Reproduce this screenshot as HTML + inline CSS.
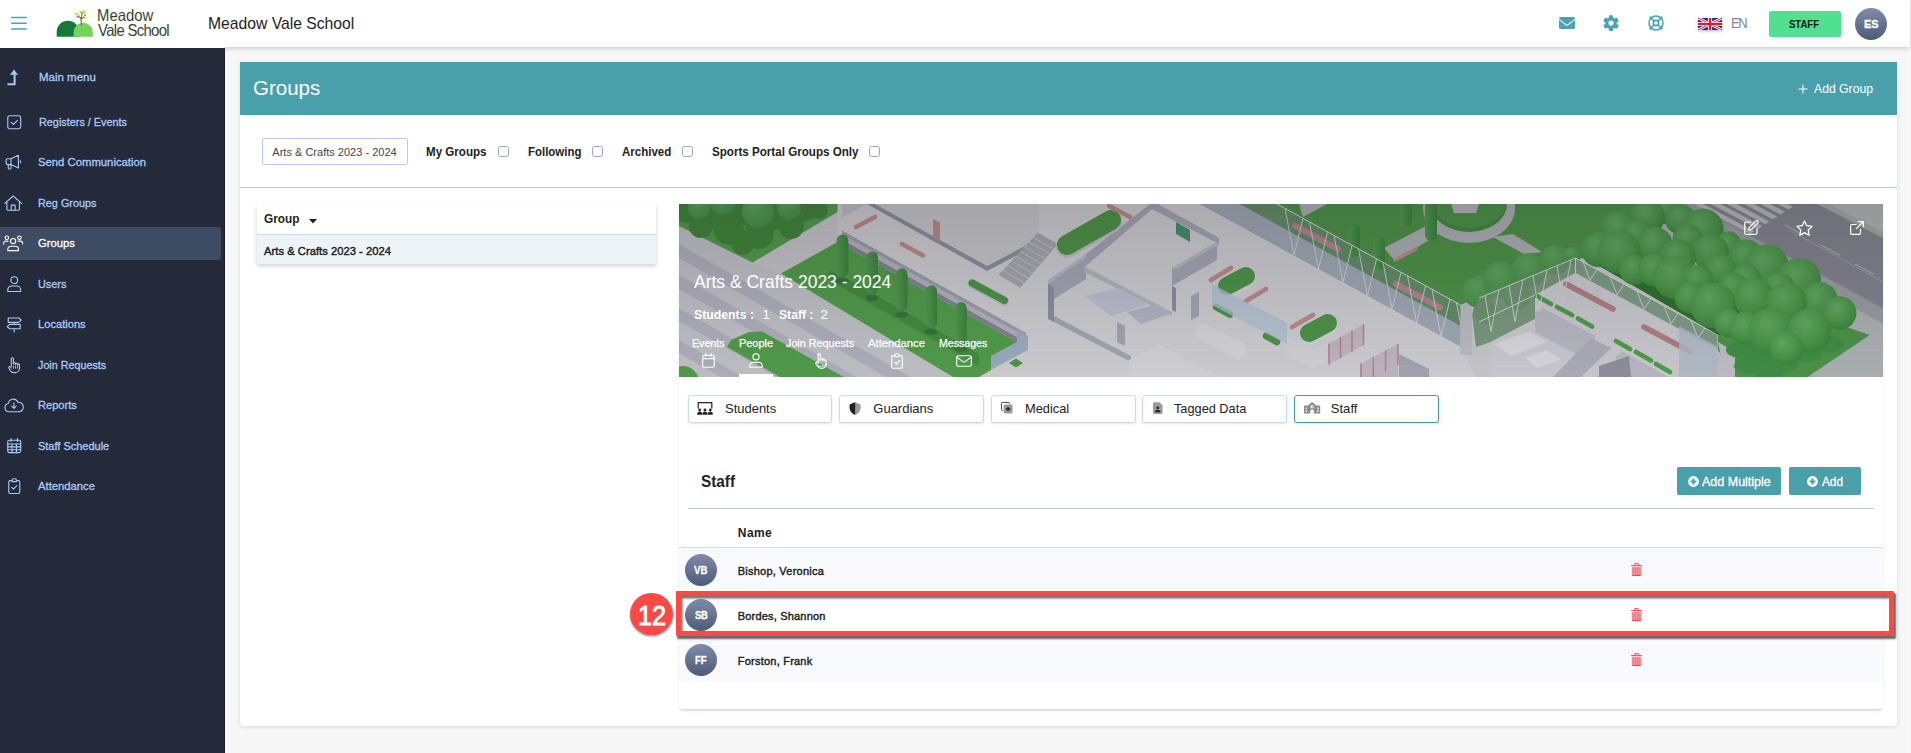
<!DOCTYPE html>
<html lang="en">
<head>
<meta charset="utf-8">
<title>Groups - Meadow Vale School</title>
<style>
*{box-sizing:border-box;margin:0;padding:0}
html,body{width:1911px;height:753px;overflow:hidden}
body{position:relative;background:#f7f7f7;font-family:"Liberation Sans",sans-serif;color:#222}
.t{position:absolute;transform-origin:0 50%;white-space:nowrap;line-height:20px;height:20px;display:block}
.abs{position:absolute}
svg{position:absolute;overflow:visible}
#top{position:absolute;left:0;top:0;width:1910px;height:47px;background:#fff;box-shadow:0 1px 5px rgba(0,0,0,.22);z-index:5}
#side{position:absolute;left:0;top:48px;width:225px;height:705px;background:#252a3a;border-right:1px solid #1b1f2d;z-index:6}
#side .active{position:absolute;left:0;top:179px;width:221px;height:33px;background:#3d4b63;border-radius:0 3px 3px 0}
#main{position:absolute;left:225px;top:48px;width:1686px;height:705px;border-right:1px solid #fcfcfc}
.card{position:absolute;left:15px;top:14px;width:1657px;height:664px;background:#fff;border-radius:0 0 4px 4px;box-shadow:0 1px 4px rgba(60,70,110,.17)}
.card-head{position:absolute;left:0;top:0;width:1657px;height:53px;background:#49a0ab}
.hr{position:absolute;height:1px;background:#b9c6dd}
.search{position:absolute;left:22px;top:76px;width:146px;height:27px;border:1px solid #b5cdee;border-radius:2px;background:#fff}
.cb{position:absolute;width:11px;height:11px;border:1px solid #9aa9c2;border-radius:2.5px;background:#fff}
.list{position:absolute;left:17px;top:142px;width:399px;height:60px;background:#fff;box-shadow:0 2px 4px rgba(60,70,110,.25)}
.list .row{position:absolute;left:0;top:30px;width:399px;height:30px;background:#ecf4f7;border-top:1px solid #c9dcf0}
.detail{position:absolute;left:439px;top:142px;width:1204px;height:505px;background:#fff;border-radius:0 0 3px 3px;box-shadow:0 1px 3px rgba(60,70,110,.12),0 3px 3px -2px rgba(60,70,110,.2)}
.banner{position:absolute;left:0;top:0;width:1204px;height:173px;overflow:hidden;background:#b9bac2}
.tab{position:absolute;top:191px;width:144px;height:28px;border:1px solid #c9dbf3;border-radius:3px;background:#fff;box-shadow:0 1px 2px rgba(120,140,180,.22)}
.tab.on{border:1.5px solid #3f9aa8}
.btn{position:absolute;top:263px;height:28px;background:#49a0ab;border-radius:2px}
.trow{position:absolute;left:0;width:1204px;height:45px;background:#f9fafd}
.av{position:absolute;width:32px;height:32px;border-radius:50%;background:linear-gradient(#7d8cab,#4e5b78)}
.hl{position:absolute;left:-3px;top:387px;width:1218px;height:44.800px;border:5px solid #fb4a46;box-shadow:1.500px 2.500px 2px rgba(0,0,0,.6),inset 1.500px 2.500px 2px rgba(0,0,0,.55);border-radius:1px}
.badge{position:absolute;width:42.600px;height:42px;border-radius:50%;background:#fb4a46;z-index:6;box-shadow:0 1.500px 2px rgba(0,0,0,.4)}

.sb{-webkit-text-stroke:.3px currentColor}
.bt{-webkit-text-stroke:.25px #fff}
#top::after{content:"";position:absolute;left:0;top:47px;width:225px;height:1px;background:#fff}
.ini{-webkit-text-stroke:.3px #fff}
.sbd{-webkit-text-stroke:.4px currentColor}
.b12{-webkit-text-stroke:.9px #fff}
.btn .t{-webkit-text-stroke:.3px #fff}

</style>
</head>
<body>
<header id="top">
<svg class="ham" style="left:11px;top:16px" width="16" height="14" viewBox="0 0 16 14"><path d="M0.7 1.5h14.6M0.7 7.2h14.6M0.7 12.9h14.6" stroke="#4aa3b1" stroke-width="1.5" stroke-linecap="round" fill="none"/></svg>
<svg class="logo" style="left:56px;top:8px" width="38" height="30" viewBox="0 0 38 30">
<path d="M0.7 28.8V24a11.2 11.2 0 0 1 22.4 0v4.8z" fill="#137a3c"/>
<path d="M17.6 28.8V24.4a9.6 9.6 0 0 1 19.2 0v4.4z" fill="#77d15a"/>
<path d="M25.3 16.6c.1-2.5-.2-4.700-.4-6.300l-2.900-2.300M25 10.300l.9-3.600M25.300 11.200l2.600-2.200" stroke="#8a5a3c" stroke-width="1.100" fill="none" stroke-linecap="round"/>
<g fill="#f5d33c"><circle cx="20.3" cy="5.800" r="1.500"/><circle cx="22.600" cy="7.100" r="1.200"/><circle cx="28.200" cy="4.300" r="1.600"/><circle cx="29.300" cy="9.800" r="1.300"/><circle cx="27.300" cy="2.800" r="1"/></g>
<g fill="#5da63c"><circle cx="26" cy="5.100" r="1.100"/><circle cx="21.300" cy="8.600" r=".9"/><circle cx="28.900" cy="7.200" r="1"/><circle cx="24.300" cy="4" r=".8"/></g>
</svg>
<span id="t1" class="t " style="left:97.00px;top:4.98px;font-size:16.5px;font-weight:400;color:#36452f;transform:scaleX(0.9010);">Meadow</span>
<span id="t2" class="t " style="left:98.00px;top:19.88px;font-size:16.5px;font-weight:400;color:#36452f;letter-spacing:-0.729px;transform:scaleX(0.9000);">Vale School</span>
<span id="t3" class="t " style="left:208.40px;top:13.95px;font-size:16.6px;font-weight:400;color:#222;transform:scaleX(0.9452);">Meadow Vale School</span>
<svg style="left:1558.700px;top:16.700px" width="16" height="12" viewBox="0 0 16 12"><path d="M1.500 0h13A1.500 1.500 0 0 1 16 1.500v.2L8.900 7.300a1.500 1.500 0 0 1-1.800 0L0 1.700v-.2A1.500 1.500 0 0 1 1.500 0z" fill="#4aa3b1"/><path d="M0 3l6.500 5.100a2.500 2.500 0 0 0 3 0L16 3v7.500A1.500 1.500 0 0 1 14.500 12h-13A1.500 1.500 0 0 1 0 10.500z" fill="#4aa3b1"/></svg>
<svg style="left:1603.300px;top:14.800px" width="16" height="17" viewBox="0 0 16 17"><path d="M6.65 1.13L9.35 1.13L9.47 3.32L11.49 4.48L13.45 3.50L14.80 5.83L12.97 7.04L12.97 9.36L14.80 10.57L13.45 12.90L11.49 11.92L9.47 13.08L9.35 15.27L6.65 15.27L6.53 13.08L4.51 11.92L2.55 12.90L1.20 10.57L3.03 9.36L3.03 7.04L1.20 5.83L2.55 3.50L4.51 4.48L6.53 3.32ZM4.60 8.20a3.40 3.40 0 1 0 6.80 0a3.40 3.40 0 1 0 -6.80 0Z" fill="#4aa3b1" fill-rule="evenodd" stroke="#4aa3b1" stroke-width="1.600" stroke-linejoin="round"/></svg>
<svg style="left:1648.200px;top:15px" width="16" height="16" viewBox="0 0 16 16"><g fill="none" stroke="#4aa3b1"><circle cx="8" cy="8" r="7" stroke-width="1.500"/><circle cx="8" cy="8" r="2.600" stroke-width="1.700"/><path d="M2.300 2.300l3.700 3.700M13.700 2.300l-3.700 3.700M2.300 13.700l3.700-3.700M13.700 13.700l-3.700-3.700" stroke-width="1.700"/><path d="M1.900 1.900l1 1M14.100 1.900l-1 1M1.900 14.100l1-1M14.100 14.100l-1-1" stroke-width="2.400"/></g></svg>
<svg style="left:1698px;top:18px;box-shadow:0 1px 3px rgba(0,0,0,.3)" width="24" height="12" viewBox="0 0 24 12"><rect width="24" height="12" fill="#1b2f8c"/><path d="M0 0l24 12M24 0L0 12" stroke="#fff" stroke-width="2.600"/><path d="M0 0l24 12M24 0L0 12" stroke="#d8202f" stroke-width="1"/><path d="M12 0v12M0 6h24" stroke="#fff" stroke-width="4.200"/><path d="M12 0v12M0 6h24" stroke="#d8202f" stroke-width="2.400"/></svg>
<span id="t4" class="t " style="left:1731.40px;top:13.21px;font-size:14.4px;font-weight:400;color:#7b80a2;letter-spacing:-1.556px;transform:scaleX(0.9000);">EN</span>
<div class="abs" style="left:1769px;top:11px;width:72px;height:26px;background:#50e090;border-radius:2px"></div>
<span id="t5" class="t " style="left:1789.30px;top:14.23px;font-size:10.6px;font-weight:700;color:#0c1a12;letter-spacing:-0.003px;transform:scaleX(0.9000);">STAFF</span>
<div class="av" style="left:1855px;top:8px"></div>
<span id="t6" class="t ini" style="left:1863.60px;top:14.19px;font-size:11px;font-weight:700;color:#fff;transform:scaleX(0.9940);">ES</span>
</header>
<nav id="side">
<div class="active"></div>
<span id="t7" class="t sb" style="left:38.50px;top:18.95px;font-size:11.7px;font-weight:400;color:#a9cbfb;transform:scaleX(0.9822);">Main menu</span>
<span id="t8" class="t sb" style="left:38.50px;top:64.15px;font-size:11.7px;font-weight:400;color:#a9cbfb;transform:scaleX(0.9278);">Registers / Events</span>
<span id="t9" class="t sb" style="left:38.30px;top:103.95px;font-size:11.7px;font-weight:400;color:#a9cbfb;transform:scaleX(0.9673);">Send Communication</span>
<span id="t10" class="t sb" style="left:38.30px;top:144.95px;font-size:11.7px;font-weight:400;color:#a9cbfb;transform:scaleX(0.9268);">Reg Groups</span>
<span id="t11" class="t sb" style="left:38.30px;top:184.95px;font-size:11.7px;font-weight:400;color:#ffffff;transform:scaleX(0.9601);">Groups</span>
<span id="t12" class="t sb" style="left:38.30px;top:225.75px;font-size:11.7px;font-weight:400;color:#a9cbfb;transform:scaleX(0.9302);">Users</span>
<span id="t13" class="t sb" style="left:38.30px;top:265.95px;font-size:11.7px;font-weight:400;color:#a9cbfb;transform:scaleX(0.9531);">Locations</span>
<span id="t14" class="t sb" style="left:37.50px;top:306.95px;font-size:11.7px;font-weight:400;color:#a9cbfb;transform:scaleX(0.9206);">Join Requests</span>
<span id="t15" class="t sb" style="left:38.30px;top:346.95px;font-size:11.7px;font-weight:400;color:#a9cbfb;transform:scaleX(0.9502);">Reports</span>
<span id="t16" class="t sb" style="left:38.30px;top:387.95px;font-size:11.7px;font-weight:400;color:#a9cbfb;transform:scaleX(0.9392);">Staff Schedule</span>
<span id="t17" class="t sb" style="left:38.30px;top:427.95px;font-size:11.7px;font-weight:400;color:#a9cbfb;transform:scaleX(0.9638);">Attendance</span>
<svg style="left:7.400px;top:20.5px" width="12" height="17" viewBox="0 0 12 17"><path d="M.5 15.300h7.100V5.200" stroke="#a9cbfb" stroke-width="2" fill="none"/><path d="M7 .3C8 2.500 9.600 4.300 11.200 5.800H2.800C4.400 4.300 6 2.500 7 .3z" fill="#a9cbfb"/></svg>
<svg style="left:6.76px;top:67.26px" width="14.47" height="14.47" viewBox="0 0 15 15" fill="none" stroke="#a9cbfb" stroke-width="1.15" stroke-linecap="round" stroke-linejoin="round"><rect x=".8" y=".8" width="13.400" height="13.400" rx="2"/><path d="M4.300 7.600l2.300 2.200 4.200-4.300"/></svg>
<svg style="left:5.10px;top:105.80px" width="16.41" height="16.41" viewBox="0 0 17 17" fill="none" stroke="#a9cbfb" stroke-width="1.15" stroke-linecap="round" stroke-linejoin="round"><path d="M6.200 4.900H2.600A1.400 1.400 0 0 0 1.200 6.300v3.300A1.400 1.400 0 0 0 2.600 11h3.600l7.700 3.600V1.300z"/><path d="M6.200 4.900v6.100M3.400 11.200v3.300a1.100 1.100 0 0 0 1.100 1.100h.6a1.100 1.100 0 0 0 1.100-1.100v-3.300M16 7v2"/></svg>
<svg style="left:4.13px;top:147.30px" width="18.34" height="16.41" viewBox="0 0 19 17" fill="none" stroke="#a9cbfb" stroke-width="1.15" stroke-linecap="round" stroke-linejoin="round"><path d="M.8 8.600L9.500 1l8.700 7.600"/><path d="M3 7v7.400a1.400 1.400 0 0 0 1.400 1.400h10.200a1.400 1.400 0 0 0 1.400-1.400V7"/><path d="M7.500 15.800v-5.300h4v5.300"/></svg>
<svg style="left:3.17px;top:186.80px" width="20.27" height="16.41" viewBox="0 0 21 17" fill="none" stroke="#ffffff" stroke-width="1.15" stroke-linecap="round" stroke-linejoin="round"><circle cx="10.500" cy="6.300" r="2.700"/><path d="M5 16.200v-1.400a3.200 3.200 0 0 1 3.200-3.200h4.600a3.200 3.200 0 0 1 3.200 3.200v1.400z"/><circle cx="4" cy="2.800" r="1.800"/><circle cx="17" cy="2.800" r="1.800"/><path d="M.7 9.300V8.600A2.300 2.300 0 0 1 3 6.300h2.300M20.300 9.300V8.600A2.300 2.300 0 0 0 18 6.300h-2.300"/></svg>
<svg style="left:6.86px;top:228.30px" width="14.47" height="16.41" viewBox="0 0 15 17" fill="none" stroke="#a9cbfb" stroke-width="1.15" stroke-linecap="round" stroke-linejoin="round"><circle cx="7.500" cy="4.300" r="3.500"/><path d="M.8 16v-1.600a4 4 0 0 1 4-4h5.400a4 4 0 0 1 4 4V16z"/></svg>
<svg style="left:5.80px;top:268.78px" width="16.41" height="15.44" viewBox="0 0 17 16" fill="none" stroke="#a9cbfb" stroke-width="1.15" stroke-linecap="round" stroke-linejoin="round"><path d="M2.300 1h10.900l2.600 2.300-2.600 2.300H2.300z"/><path d="M14.700 7.600H3.800L1.200 9.900l2.600 2.300h10.900z"/><path d="M8.500 5.600v2M8.500 12.200v3.300"/></svg>
<svg style="left:7.83px;top:308.80px" width="12.54" height="16.41" viewBox="0 0 13 17" fill="none" stroke="#a9cbfb" stroke-width="1.15" stroke-linecap="round" stroke-linejoin="round"><path d="M3.400 9.200V1.800a1.100 1.100 0 0 1 2.200 0v5.400"/><path d="M5.600 6.800a1.050 1.050 0 0 1 2.100 0v1M7.700 7.500a1.050 1.050 0 0 1 2.100 0v1M9.800 8.200a1.050 1.050 0 0 1 2.100 0v3.600a4.400 4.400 0 0 1-4.400 4.400H6.300A4.600 4.600 0 0 1 2.500 14.200L.9 11.300a1 1 0 0 1 1.700-1l.8 1.100"/><path d="M5.600 9.200v2.500M7.700 9.200v2.500M9.800 9.800v1.900" stroke-width=".9"/></svg>
<svg style="left:3.97px;top:349.76px" width="20.27" height="14.47" viewBox="0 0 21 15" fill="none" stroke="#a9cbfb" stroke-width="1.15" stroke-linecap="round" stroke-linejoin="round"><path d="M5.200 14.200a4.300 4.300 0 0 1-.8-8.500 5.200 5.200 0 0 1 10-1.200 4.900 4.900 0 0 1 1.500 9.700z"/><path d="M10.300 5v5.500M8 8.500l2.300 2.300 2.300-2.300"/></svg>
<svg style="left:6.86px;top:390.28px" width="14.47" height="15.44" viewBox="0 0 15 16" fill="none" stroke="#a9cbfb" stroke-width="1.15" stroke-linecap="round" stroke-linejoin="round"><rect x=".8" y="2.400" width="13.400" height="12.800" rx="1.600"/><path d="M4.200.6v3M10.800.6v3M.8 6.200h13.400M.8 9.200h13.400M.8 12.200h13.400M5.200 6.200v9M9.800 6.200v9"/></svg>
<svg style="left:8.03px;top:430.30px" width="12.54" height="16.41" viewBox="0 0 13 17" fill="none" stroke="#a9cbfb" stroke-width="1.15" stroke-linecap="round" stroke-linejoin="round"><path d="M3.800 2.700H2.200A1.400 1.400 0 0 0 .8 4.100v10.500A1.400 1.400 0 0 0 2.200 16h8.600a1.400 1.400 0 0 0 1.400-1.400V4.100a1.400 1.400 0 0 0-1.400-1.400H9.200"/><path d="M4.300 3.700V2a1.300 1.300 0 0 1 1.300-1.300h1.800A1.300 1.300 0 0 1 8.700 2v1.700z"/><path d="M3.800 9.800l1.900 1.800 3.500-3.600"/></svg>
</nav>
<main id="main">
<section class="card">
<div class="card-head"><span id="t18" class="t " style="left:13.30px;top:16.12px;font-size:21px;font-weight:400;color:#fff;transform:scaleX(0.9757);">Groups</span><svg style="left:1558px;top:21.5px" width="10" height="10" viewBox="0 0 10 10"><path d="M5 .5v9M.5 5h9" stroke="#fff" stroke-width="1" fill="none"/></svg><span id="t19" class="t " style="left:1573.50px;top:16.80px;font-size:13px;font-weight:400;color:#fff;transform:scaleX(0.9384);">Add Group</span></div>
<div class="search"><span id="t20" class="t " style="left:9.30px;top:3.19px;font-size:11px;font-weight:400;color:#444;letter-spacing:0.011px;">Arts &amp; Crafts 2023 - 2024</span></div>
<span id="t21" class="t " style="left:186.30px;top:79.84px;font-size:12px;font-weight:700;color:#222;transform:scaleX(0.9653);">My Groups</span>
<span class="cb" style="left:257.5px;top:84.0px"></span>
<span id="t22" class="t " style="left:288.00px;top:79.84px;font-size:12px;font-weight:700;color:#222;transform:scaleX(0.9536);">Following</span>
<span class="cb" style="left:352.3px;top:84.0px"></span>
<span id="t23" class="t " style="left:382.20px;top:79.84px;font-size:12px;font-weight:700;color:#222;transform:scaleX(0.9580);">Archived</span>
<span class="cb" style="left:442.0px;top:84.0px"></span>
<span id="t24" class="t " style="left:472.20px;top:79.84px;font-size:12px;font-weight:700;color:#222;transform:scaleX(0.9679);">Sports Portal Groups Only</span>
<span class="cb" style="left:629.3px;top:84.0px"></span>
<div class="hr" style="left:0;top:125px;width:1657px"></div>
<div class="list"><span id="t25" class="t " style="left:7.00px;top:4.84px;font-size:12px;font-weight:700;color:#222;transform:scaleX(0.9861);">Group</span><svg style="left:52px;top:15px" width="8" height="5" viewBox="0 0 8 5"><path d="M0 0h8L4 4.600z" fill="#222"/></svg><div class="row"><span id="t26" class="t sbd" style="left:7.00px;top:5.52px;font-size:11.2px;font-weight:400;color:#1c1c1c;letter-spacing:0.032px;">Arts &amp; Crafts 2023 - 2024</span></div></div>
<div class="detail"><div class="banner"><svg style="left:0;top:0" width="1204" height="173" viewBox="0 0 1204 173"><rect width="1204" height="173" fill="#d9d9de"/>
<defs><radialGradient id="tg" cx="40%" cy="34%" r="78%"><stop offset="0" stop-color="#6cb86c"/><stop offset=".55" stop-color="#52a450"/><stop offset="1" stop-color="#388a3c"/></radialGradient><radialGradient id="tg2" cx="40%" cy="30%" r="80%"><stop offset="0" stop-color="#66b466"/><stop offset="1" stop-color="#479a4a"/></radialGradient><linearGradient id="cg" x1="0" x2="1" y1="0" y2="0"><stop offset="0" stop-color="#5aa85a"/><stop offset="1" stop-color="#3f8f40"/></linearGradient></defs>
<polygon points="0,0 360,0 360,173 0,173" fill="#d2d2d9" />
<polygon points="0,40 330,229.75 330,243.75 0,54" fill="#c0c0ce" />
<polygon points="0,71 330,260.75 330,274.75 0,85" fill="#c0c0ce" />
<polygon points="0,104 330,293.75 330,306.75 0,117" fill="#c0c0ce" />
<polygon points="0,136 330,325.75 330,338.75 0,149" fill="#c0c0ce" />
<polygon points="73,59 172,0 215,0 158.5,38 102,70" fill="#d6d6dc" />
<polygon points="0,0 172,0 73.5,58.6 0,22" fill="#58aa52" />
<circle cx="8" cy="4" r="15" fill="#47913f"/>
<circle cx="36" cy="10" r="16" fill="#47913f"/>
<circle cx="22" cy="22" r="12" fill="#47913f"/>
<circle cx="66" cy="4" r="17" fill="#47913f"/>
<circle cx="96" cy="10" r="16" fill="#47913f"/>
<circle cx="50" cy="26" r="15" fill="#47913f"/>
<circle cx="80" cy="30" r="15" fill="#47913f"/>
<circle cx="112" cy="22" r="13" fill="#47913f"/>
<circle cx="126" cy="4" r="13" fill="#47913f"/>
<circle cx="64" cy="40" r="11" fill="#47913f"/>
<circle cx="140" cy="6" r="9" fill="#47913f"/>
<circle cx="44" cy="-2" r="13" fill="url(#tg2)"/>
<circle cx="79" cy="8" r="16" fill="url(#tg2)"/>
<circle cx="20" cy="4" r="11" fill="url(#tg2)"/>
<circle cx="110" cy="4" r="12" fill="url(#tg2)"/>
<polygon points="83,127.5 165,173 101,173 48,143 52,136 70,128" fill="#58aa52" />
<circle cx="4" cy="178" r="16" fill="#58aa52"/>
<polygon points="158.5,0 215,0 360,60 360,150 338,138 158.5,38" fill="#e1e1e5" />
<polygon points="163,35.5065 347,137.995 347,143.995 338,138 163,40.5065" fill="#8f8f9f" />
<polygon points="163,30.5065 347,132.995 347,137.995 163,35.5065" fill="#c2c2cf" />
<polygon points="163,26.5065 347,128.995 347,132.995 163,30.5065" fill="#a9a9b9" />
<polygon points="338,126 349,132 349,146 312,166 312,152 338,138" fill="#a9bbd0" />
<polygon points="102,69.6 158.5,38 338,138 312,152 312,173 274,173" fill="#58aa52" />
<polygon points="150,66 163,72 300,150 300,162 150,76" fill="#4a9844" />
<ellipse cx="163.5" cy="77" rx="6.500" ry="3.200" fill="#3a7f41"/>
<rect x="157.7" y="30.5" width="11.600" height="43" rx="5.800" fill="url(#cg)"/>
<ellipse cx="193.1" cy="93.9" rx="6.500" ry="3.200" fill="#3a7f41"/>
<rect x="187.3" y="47.4" width="11.600" height="43" rx="5.800" fill="url(#cg)"/>
<ellipse cx="222.7" cy="110.8" rx="6.500" ry="3.200" fill="#3a7f41"/>
<rect x="216.9" y="64.3" width="11.600" height="43" rx="5.800" fill="url(#cg)"/>
<ellipse cx="252.3" cy="127.7" rx="6.500" ry="3.200" fill="#3a7f41"/>
<rect x="246.5" y="81.2" width="11.600" height="43" rx="5.800" fill="url(#cg)"/>
<ellipse cx="281.9" cy="144.6" rx="6.500" ry="3.200" fill="#3a7f41"/>
<rect x="276.1" y="98.1" width="11.600" height="43" rx="5.800" fill="url(#cg)"/>
<polygon points="196,0 308,62 400,14 400,0" fill="#d9d9de" />
<polygon points="196,0 308,62 400,14 400,19 308,67 188,0" fill="#9a9aad" />
<polygon points="163,0 188,0 163,14" fill="#cfcfd8" />
<polygon points="254,15 261,18.5 261,37 254,33.5" fill="#cf9698" />
<line x1="223" y1="40" x2="244" y2="51.5" stroke="#cf9698" stroke-width="4.6" stroke-linecap="round" stroke-linecap="butt"/>
<line x1="177" y1="23" x2="196" y2="13" stroke="#cf9698" stroke-width="4.6" stroke-linecap="round" stroke-linecap="butt"/>
<polygon points="360,60 360,0 519.5,0 781,143 797,173 300,173 312,166 349,146" fill="#e1e1e5" />
<polygon points="319.5,71 358.5,28.7 379,40 341,84" fill="#b4b4be" />
<path d="M319.5 71L341 84" stroke="#d4d4dc" stroke-width="1"/>
<path d="M323.833 66.3L345.222 79.1111" stroke="#d4d4dc" stroke-width="1"/>
<path d="M328.167 61.6L349.444 74.2222" stroke="#d4d4dc" stroke-width="1"/>
<path d="M332.5 56.9L353.667 69.3333" stroke="#d4d4dc" stroke-width="1"/>
<path d="M336.833 52.2L357.889 64.4444" stroke="#d4d4dc" stroke-width="1"/>
<path d="M341.167 47.5L362.111 59.5556" stroke="#d4d4dc" stroke-width="1"/>
<path d="M345.5 42.8L366.333 54.6667" stroke="#d4d4dc" stroke-width="1"/>
<path d="M349.833 38.1L370.556 49.7778" stroke="#d4d4dc" stroke-width="1"/>
<path d="M354.167 33.4L374.778 44.8889" stroke="#d4d4dc" stroke-width="1"/>
<line x1="293" y1="80" x2="325.5" y2="97.5" stroke="#d0d0d8" stroke-width="9" stroke-linecap="round" />
<line x1="293" y1="79" x2="325.5" y2="96.5" stroke="#54a04e" stroke-width="7.2" stroke-linecap="round" />
<polygon points="330,159 337,154.5 344,159 337,163.5" fill="#54a04e" />
<polygon points="369,76 400,57 407,50 471,0 479,0 407,62 407,75 375,95 369,92" fill="#b3b3c4" />
<polygon points="369,76 407,50 407,54 369,80" fill="#c6c6d2" />
<polygon points="369,80 375,83 375,118 369,115" fill="#9a9aad" />
<polygon points="375,112 452,152 452,158 375,118" fill="#b3b3c4" />
<polygon points="405,62 493,108 493,112 405,68" fill="#c4c4d0" />
<polygon points="471,0 479,0 540,34 540,40 471,4" fill="#b3b3c4" />
<polygon points="493,64 538,38 538,56 493,82" fill="#b3b3c4" />
<polygon points="493,64 538,38 541,40 496,66" fill="#c6c6d2" />
<polygon points="493,82 497,84 497,108 493,106" fill="#9a9aad" />
<polygon points="512,92 520,88 520,112 512,116" fill="#b3b3c4" />
<polygon points="438,118 446,122 446,142 438,138" fill="#b3b3c4" />
<polygon points="406,92 440,84 470,100 432,112" fill="#cfcfe2" />
<polygon points="448,108 478,100 492,110 462,120" fill="#c3c3d8" />
<line x1="524" y1="128" x2="560" y2="146" stroke="#e8e8ec" stroke-width="16" stroke-linecap="round" />
<polygon points="450,156 480,140 540,173 450,173" fill="#e6e6ea" />
<polygon points="497,18 511,26 511,38 497,30" fill="#4d9a78" />
<line x1="388" y1="43" x2="432" y2="18" stroke="#cdcdd6" stroke-width="22" stroke-linecap="round" />
<line x1="388" y1="41" x2="432" y2="16" stroke="#54a04e" stroke-width="20" stroke-linecap="round" />
<line x1="430" y1="2" x2="451" y2="13" stroke="#cf9698" stroke-width="4.6" stroke-linecap="round" stroke-linecap="butt"/>
<line x1="548" y1="85" x2="567" y2="75" stroke="#e6e6ea" stroke-width="19" stroke-linecap="round" />
<line x1="548" y1="82" x2="567" y2="72" stroke="#54a04e" stroke-width="18" stroke-linecap="round" />
<line x1="630" y1="132" x2="649" y2="122" stroke="#e6e6ea" stroke-width="19" stroke-linecap="round" />
<line x1="630" y1="129" x2="649" y2="119" stroke="#54a04e" stroke-width="18" stroke-linecap="round" />
<polygon points="606,132 634,146 661,132 661,150 634,164 606,150" fill="#e4e4e9" />
<line x1="537" y1="103" x2="551" y2="110.5" stroke="#54a04e" stroke-width="6.6" stroke-linecap="round" />
<line x1="587" y1="132" x2="598" y2="138" stroke="#54a04e" stroke-width="6.6" stroke-linecap="round" />
<line x1="532" y1="76" x2="552" y2="64" stroke="#cf9698" stroke-width="4.8" stroke-linecap="round" stroke-linecap="butt"/>
<line x1="567" y1="97" x2="587" y2="85" stroke="#cf9698" stroke-width="4.8" stroke-linecap="round" stroke-linecap="butt"/>
<line x1="613" y1="123" x2="634" y2="111" stroke="#cf9698" stroke-width="4.8" stroke-linecap="round" stroke-linecap="butt"/>
<polygon points="533,80 608,119 608,140 533,101" fill="#bdd0e4" opacity=".75"/>
<polygon points="649,140 685,120 685,141 649,161" fill="#d2c6d0" />
<path d="M650 139.5v21" stroke="#c58f95" stroke-width="1.500"/>
<path d="M661.5 133.1v21" stroke="#c58f95" stroke-width="1.500"/>
<path d="M673 126.7v21" stroke="#c58f95" stroke-width="1.500"/>
<path d="M684.5 120.3v21" stroke="#c58f95" stroke-width="1.500"/>
<polygon points="681,160 719,140 719,173 681,173" fill="#d2c6d0" />
<path d="M682 159.5v21" stroke="#c58f95" stroke-width="1.500"/>
<path d="M694.3 153v21" stroke="#c58f95" stroke-width="1.500"/>
<path d="M706.6 146.5v21" stroke="#c58f95" stroke-width="1.500"/>
<path d="M718.9 140v21" stroke="#c58f95" stroke-width="1.500"/>
<polygon points="720,150 750,165 750,173 720,173" fill="#b3b3c4" />
<polygon points="560.8,0 1014,0 1014,60 896.5,54 781.5,101 781.5,122" fill="#54a04e" />
<polygon points="519.5,0 598,0 781.5,101 781.5,143" fill="#aeb8c6" />
<polygon points="560.8,0 598,0 781.5,101 781.5,122" fill="#6b9a70" />
<ellipse cx="790" cy="4" rx="46" ry="35" fill="#bcc1c3"/>
<ellipse cx="790" cy="0" rx="38" ry="28" fill="#4a9346"/>
<ellipse cx="790" cy="-4" rx="38" ry="28" fill="#54a04e"/>
<polygon points="772,0 800,0 797,9 775,9" fill="#c6c6cc" />
<polygon points="814,33 834,30 863,48 846,50.5" fill="#bcc1c3" />
<polygon points="705,44 747,22 760,30 716,57" fill="#bcc1c3" />
<polygon points="620,0 648,0 624,13" fill="#bcc1c3" />
<rect x="669" y="19.5" width="12" height="33.5" rx="6" fill="url(#cg)"/>
<rect x="694" y="33" width="12" height="33" rx="6" fill="url(#cg)"/>
<rect x="721" y="-8" width="12" height="31" rx="6" fill="url(#cg)"/>
<rect x="746" y="-8" width="12" height="45" rx="6" fill="url(#cg)"/>
<line x1="616" y1="22" x2="659" y2="45" stroke="#c58f9a" stroke-width="6" stroke-linecap="round" />
<line x1="717" y1="80" x2="761" y2="103.5" stroke="#c58f9a" stroke-width="6" stroke-linecap="round" />
<line x1="716" y1="56" x2="737" y2="45" stroke="#cf9698" stroke-width="3.6" stroke-linecap="round" stroke-linecap="butt"/>
<path d="M598 0L781.500 101M519.500 0L781 143" stroke="#e4e6ea" stroke-width="1" fill="none"/>
<path d="M606 4.4032L615 51.4032L624 14.4032" stroke="#e4e6ea" stroke-width=".9" fill="none"/>
<path d="M630.5 17.888L639.5 64.888L648.5 27.888" stroke="#e4e6ea" stroke-width=".9" fill="none"/>
<path d="M655 31.3728L664 78.3728L673 41.3728" stroke="#e4e6ea" stroke-width=".9" fill="none"/>
<path d="M679.5 44.8576L688.5 91.8576L697.5 54.8576" stroke="#e4e6ea" stroke-width=".9" fill="none"/>
<path d="M704 58.3424L713 105.342L722 68.3424" stroke="#e4e6ea" stroke-width=".9" fill="none"/>
<path d="M728.5 71.8272L737.5 118.827L746.5 81.8272" stroke="#e4e6ea" stroke-width=".9" fill="none"/>
<path d="M753 85.312L762 132.312L771 95.312" stroke="#e4e6ea" stroke-width=".9" fill="none"/>
<path d="M777.5 98.7968L786.5 145.797L795.5 108.797" stroke="#e4e6ea" stroke-width=".9" fill="none"/>
<polygon points="781.5,101 793,98 793,151 781.5,151" fill="#cbcbd3" />
<circle cx="800" cy="88" r="16" fill="url(#tg2)"/>
<circle cx="822" cy="76" r="18" fill="url(#tg2)"/>
<circle cx="850" cy="66" r="17" fill="url(#tg2)"/>
<circle cx="876" cy="56" r="15" fill="url(#tg2)"/>
<circle cx="838" cy="92" r="14" fill="url(#tg2)"/>
<circle cx="806" cy="108" r="12" fill="url(#tg2)"/>
<circle cx="893" cy="52" r="9" fill="url(#tg2)"/>
<polygon points="800,94 896.5,54 896.5,69 856,91 856,115 811.5,138 797,143 793,110" fill="#7aa17d" opacity=".9"/>
<polygon points="896.5,54 1039,131 1039,146 896.5,69" fill="#8aaa93" />
<polygon points="856,91 896.5,69 1039,146 1039,173 811.5,173 811.5,138 856,115" fill="#dcdce2" />
<polygon points="856,108 864,104 916,132 916,152 908,156 856,128" fill="#c9c9d6" />
<polygon points="937,152 944,148 990,173 937,173" fill="#c9c9d6" />
<polygon points="874,173 912,134 932,144 902,173" fill="#bdbdc8" />
<polygon points="920,162 950,152 952,173 920,173" fill="#9d9da8" />
<polygon points="815,140 850,128 868,138 832,152" fill="#ececf0" />
<polygon points="846,154 868,146 882,156 858,164" fill="#ececf0" />
<line x1="858" y1="92" x2="872" y2="100" stroke="#55ac52" stroke-width="4.8" stroke-linecap="round" />
<line x1="878" y1="103" x2="893" y2="111" stroke="#55ac52" stroke-width="4.8" stroke-linecap="round" />
<line x1="899" y1="114.5" x2="913" y2="122.5" stroke="#55ac52" stroke-width="4.8" stroke-linecap="round" />
<line x1="937" y1="137" x2="951" y2="145" stroke="#55ac52" stroke-width="4.8" stroke-linecap="round" />
<line x1="957" y1="148" x2="972" y2="156.5" stroke="#55ac52" stroke-width="4.8" stroke-linecap="round" />
<line x1="977" y1="160" x2="991" y2="168" stroke="#55ac52" stroke-width="4.8" stroke-linecap="round" />
<line x1="887" y1="80" x2="934" y2="105" stroke="#c08a8c" stroke-width="5.6" stroke-linecap="round" stroke-linecap="butt"/>
<line x1="965" y1="123" x2="1012" y2="148" stroke="#c08a8c" stroke-width="5.6" stroke-linecap="round" stroke-linecap="butt"/>
<path d="M800 94L896.500 54L1039 131M896.500 54V69M1039 131V173M856 91L800 118" stroke="#e4e6ea" stroke-width="1" fill="none"/>
<path d="M806 91.516L812 127.516L820 85.516" stroke="#e4e6ea" stroke-width=".9" fill="none"/>
<path d="M830 81.58L836 117.58L844 75.58" stroke="#e4e6ea" stroke-width=".9" fill="none"/>
<path d="M854 71.644L860 107.644L868 65.644" stroke="#e4e6ea" stroke-width=".9" fill="none"/>
<path d="M878 61.708L884 97.708L892 55.708" stroke="#e4e6ea" stroke-width=".9" fill="none"/>
<path d="M904 58.05L911 76.05L918 65.55" stroke="#e4e6ea" stroke-width=".9" fill="none"/>
<path d="M931 72.63L938 90.63L945 80.13" stroke="#e4e6ea" stroke-width=".9" fill="none"/>
<path d="M958 87.21L965 105.21L972 94.71" stroke="#e4e6ea" stroke-width=".9" fill="none"/>
<path d="M985 101.79L992 119.79L999 109.29" stroke="#e4e6ea" stroke-width=".9" fill="none"/>
<path d="M1012 116.37L1019 134.37L1026 123.87" stroke="#e4e6ea" stroke-width=".9" fill="none"/>
<polygon points="1000,122 1039,143 1039,173 1000,173" fill="#c0cad8" opacity=".85"/>
<polygon points="960,0 1204,0 1204,173 1039,173 1039,131" fill="#bcc1c3" />
<polygon points="990,0 1030,0 1204,95 1204,120" fill="#a9a9b4" />
<polygon points="1014,0 1204,0 1204,104.5" fill="#90909d" />
<polygon points="1138,0 1204,0 1204,34" fill="#b4bab8" />
<polygon points="1150,0 1204,0 1204,28" fill="#c2c8c6" />
<polygon points="1014.5,0 1024.2,0 1075.46,27.1654 1071.05,29.9716" fill="#c9c9cd" />
<polygon points="1031.9,0 1041.6,0 1083.36,22.1316 1078.95,24.9378" fill="#c9c9cd" />
<polygon points="1047.8,0 1057.5,0 1090.58,17.5317 1086.17,20.3379" fill="#c9c9cd" />
<polygon points="1065,0 1074.7,0 1098.39,12.5557 1093.98,15.3619" fill="#c9c9cd" />
<polygon points="1081.5,0 1091.2,0 1105.88,7.78221 1101.48,10.5884" fill="#c9c9cd" />
<polygon points="1098.7,0 1108.4,0 1113.69,2.80622 1109.29,5.61245" fill="#c9c9cd" />
<path d="M1106 21l19 10.500M1142 41l19 10.500M1176 60l19 10.500" stroke="#bcbcc4" stroke-width="1.300"/>
<path d="M1110 26L1204 78" stroke="#b2b2ba" stroke-width=".8"/>
<polygon points="1039,146 1039,120 1100,100 1190.7,131 1128.6,173 1055,173" fill="#54a04e" />
<polygon points="1039,146 1055,173 1039,173" fill="#d0d0d6" />
<polygon points="1039,138 1056,148 1056,173 1046,173" fill="#d0d0d6" />
<polygon points="903,52 925,30 1000,70 1080,112 1060,128 1039,131" fill="#347a33" />
<ellipse cx="1062" cy="146" rx="15" ry="8" fill="#469a4b"/>
<ellipse cx="1085" cy="152" rx="15" ry="8" fill="#469a4b"/>
<ellipse cx="1105" cy="160" rx="15" ry="8" fill="#469a4b"/>
<ellipse cx="1128" cy="150" rx="15" ry="8" fill="#469a4b"/>
<ellipse cx="1150" cy="140" rx="15" ry="8" fill="#469a4b"/>
<ellipse cx="1090" cy="168" rx="15" ry="8" fill="#469a4b"/>
<ellipse cx="1070" cy="162" rx="15" ry="8" fill="#469a4b"/>
<circle cx="988.49" cy="5.06586" r="15.1976" fill="url(#tg)"/>
<circle cx="968.227" cy="12.6646" r="17.7305" fill="url(#tg)"/>
<circle cx="1001.16" cy="15.1976" r="15.1976" fill="url(#tg)"/>
<circle cx="940.365" cy="25.3293" r="18.997" fill="url(#tg)"/>
<circle cx="1023.95" cy="25.3293" r="20.77" fill="url(#tg)"/>
<circle cx="958.095" cy="30.3951" r="15.1976" fill="url(#tg)"/>
<circle cx="1008.75" cy="35.461" r="15.1976" fill="url(#tg)"/>
<circle cx="975.826" cy="40.5268" r="17.7305" fill="url(#tg)"/>
<circle cx="1049.28" cy="40.5268" r="13.1712" fill="url(#tg)"/>
<circle cx="920.101" cy="45.5927" r="17.7305" fill="url(#tg)"/>
<circle cx="940.365" cy="48.1256" r="21.5299" fill="url(#tg)"/>
<circle cx="1031.55" cy="48.1256" r="18.2371" fill="url(#tg)"/>
<circle cx="998.622" cy="53.1915" r="18.2371" fill="url(#tg)"/>
<circle cx="1067.01" cy="53.1915" r="17.7305" fill="url(#tg)"/>
<circle cx="1087.27" cy="63.3232" r="22.7964" fill="url(#tg)"/>
<circle cx="955.562" cy="65.8561" r="15.1976" fill="url(#tg)"/>
<circle cx="975.826" cy="65.8561" r="16.7173" fill="url(#tg)"/>
<circle cx="1041.68" cy="65.8561" r="15.7042" fill="url(#tg)"/>
<circle cx="996.089" cy="73.4549" r="21.7832" fill="url(#tg)"/>
<circle cx="1120.2" cy="75.9878" r="21.7832" fill="url(#tg)"/>
<circle cx="1067.01" cy="75.9878" r="15.7042" fill="url(#tg)"/>
<circle cx="1018.89" cy="75.9878" r="15.1976" fill="url(#tg)"/>
<circle cx="1054.35" cy="83.5866" r="15.1976" fill="url(#tg)"/>
<circle cx="1099.94" cy="83.5866" r="15.1976" fill="url(#tg)"/>
<circle cx="1011.29" cy="93.7183" r="15.7042" fill="url(#tg)"/>
<circle cx="1074.61" cy="93.7183" r="20.2634" fill="url(#tg)"/>
<circle cx="1140.47" cy="96.2513" r="18.2371" fill="url(#tg)"/>
<circle cx="1107.54" cy="98.7842" r="20.2634" fill="url(#tg)"/>
<circle cx="1034.08" cy="101.317" r="22.7964" fill="url(#tg)"/>
<circle cx="1160.73" cy="108.916" r="16.7173" fill="url(#tg)"/>
<circle cx="1049.28" cy="119.048" r="14.1844" fill="url(#tg)"/>
<circle cx="1067.01" cy="124.113" r="16.7173" fill="url(#tg)"/>
<circle cx="1092.34" cy="126.646" r="22.7964" fill="url(#tg)"/>
<circle cx="1130.33" cy="126.646" r="21.7832" fill="url(#tg)"/>
<circle cx="1107.54" cy="144.377" r="16.7173" fill="url(#tg)"/></svg>
<div class="abs" style="left:0;top:0;width:1204px;height:173px;background:linear-gradient(rgba(12,12,16,.25),rgba(12,12,16,.11))"></div>
<span id="t43" class="t " style="left:15.30px;top:67.94px;font-size:17.5px;font-weight:400;color:#fff;transform:scaleX(0.9991);">Arts &amp; Crafts 2023 - 2024</span>
<span id="t44" class="t " style="left:15.30px;top:101.09px;font-size:13.3px;font-weight:700;color:#fff;transform:scaleX(0.9229);">Students :</span>
<span id="t45" class="t " style="left:83.60px;top:101.09px;font-size:13.3px;font-weight:400;color:#fff;">1</span>
<span id="t46" class="t " style="left:100.00px;top:101.09px;font-size:13.3px;font-weight:700;color:#fff;transform:scaleX(0.9131);">Staff :</span>
<span id="t47" class="t " style="left:141.40px;top:101.09px;font-size:13.3px;font-weight:400;color:#fff;">2</span>
<span id="t48" class="t bt" style="left:13.40px;top:129.41px;font-size:11.8px;font-weight:400;color:#fff;transform:scaleX(0.9036);">Events</span>
<span id="t49" class="t bt" style="left:59.80px;top:129.41px;font-size:11.8px;font-weight:400;color:#fff;transform:scaleX(0.9256);">People</span>
<span id="t50" class="t bt" style="left:106.80px;top:129.41px;font-size:11.8px;font-weight:400;color:#fff;transform:scaleX(0.9122);">Join Requests</span>
<span id="t51" class="t bt" style="left:188.80px;top:129.41px;font-size:11.8px;font-weight:400;color:#fff;transform:scaleX(0.9550);">Attendance</span>
<span id="t52" class="t bt" style="left:260.20px;top:129.41px;font-size:11.8px;font-weight:400;color:#fff;letter-spacing:-0.032px;transform:scaleX(0.9000);">Messages</span>
<svg style="left:23px;top:149px" width="13" height="15" viewBox="0 0 13 15" fill="none" stroke="#fff" stroke-width="1.1" stroke-linecap="round" stroke-linejoin="round"><rect x=".7" y="2.300" width="11.600" height="12" rx="1.500"/><path d="M3.600.6v2.600M9.400.6v2.600M.7 5.600h11.600"/></svg>
<svg style="left:70px;top:149px" width="14" height="15" viewBox="0 0 14 15" fill="none" stroke="#fff" stroke-width="1.1" stroke-linecap="round" stroke-linejoin="round"><circle cx="7" cy="3.800" r="3.100"/><path d="M.7 14.300v-1.200a3.700 3.700 0 0 1 3.700-3.700h5.200a3.700 3.700 0 0 1 3.700 3.700v1.200z"/></svg>
<svg style="left:135.5px;top:148.5px" width="12" height="16" viewBox="0 0 12 16" fill="none" stroke="#fff" stroke-width="1.15" stroke-linecap="round" stroke-linejoin="round"><path d="M3.100 9.800V1.700a1.050 1.050 0 0 1 2.100 0v5.600"/><path d="M5.200 7V6.400a1 1 0 0 1 2 0v1.400M7.200 7.100V6.800a1 1 0 0 1 2 0v1.300M9.200 7.700a1 1 0 0 1 2 0v3.400a4.300 4.300 0 0 1-4.300 4.300H6.400a4.500 4.500 0 0 1-3.800-2.100L.9 10.600a1 1 0 0 1 1.700-1.100l.5.800"/><path d="M2.600 12.200c1.500 1.500 6.300 1.600 8.300-.2" stroke-width=".9"/></svg>
<svg style="left:211.79999999999995px;top:148.5px" width="12" height="16" viewBox="0 0 12 16" fill="none" stroke="#fff" stroke-width="1.15" stroke-linecap="round" stroke-linejoin="round"><path d="M3.500 2.600H2A1.300 1.300 0 0 0 .7 3.900v10A1.300 1.300 0 0 0 2 15.200h8a1.300 1.300 0 0 0 1.300-1.300v-10A1.300 1.300 0 0 0 10 2.600H8.500"/><path d="M3.900 3.600V2A1.300 1.300 0 0 1 5.200.7h1.600A1.300 1.300 0 0 1 8.100 2v1.600z"/><path d="M3.500 9.300l1.800 1.800 3.400-3.600"/></svg>
<svg style="left:277px;top:150.5px" width="16" height="12" viewBox="0 0 16 12" fill="none" stroke="#fff" stroke-width="1.1" stroke-linecap="round" stroke-linejoin="round"><rect x=".7" y=".7" width="14.600" height="10.600" rx="1.600"/><path d="M.9 2.300l6 4.300a1.900 1.900 0 0 0 2.200 0l6-4.300"/></svg>
<div class="abs" style="left:59.799999999999955px;top:170px;width:34px;height:3px;background:#fff"></div>
<svg style="left:1064.5px;top:16px" width="15" height="15" viewBox="0 0 15 15" fill="none" stroke="#fff" stroke-width="1.2" stroke-linecap="round" stroke-linejoin="round"><path d="M6.500 2H2.300A1.600 1.600 0 0 0 .7 3.600v9.100a1.600 1.600 0 0 0 1.600 1.600h9.100a1.600 1.600 0 0 0 1.600-1.600V8.500"/><path d="M11.700 1.100a1.450 1.450 0 0 1 2.100 2.100L7.500 9.500l-2.700.6.600-2.700z"/></svg>
<svg style="left:1117px;top:16px" width="17" height="16" viewBox="0 0 17 16" fill="none" stroke="#fff" stroke-width="1.2" stroke-linecap="round" stroke-linejoin="round"><path d="M8.500.9l2.300 4.800 5.300.7-3.900 3.600 1 5.200-4.700-2.600-4.700 2.600 1-5.200L.9 6.400l5.300-.7z"/></svg>
<svg style="left:1171px;top:16.5px" width="14" height="14" viewBox="0 0 14 14" fill="none" stroke="#fff" stroke-width="1.2" stroke-linecap="round" stroke-linejoin="round"><path d="M10.500 8v4a1.400 1.400 0 0 1-1.400 1.400H2A1.400 1.400 0 0 1 .6 12V4.900A1.400 1.400 0 0 1 2 3.500h4"/><path d="M8.300.7h5v5M13.100.9L6.300 7.700"/></svg></div>
<div class="tab" style="left:9.0px;width:144px"><svg style="left:8.200px;top:6.300px" width="16" height="13" viewBox="0 0 16 13"><path d="M1.200 6.500V.7h13.600v5.800" fill="none" stroke="#222" stroke-width="1.200"/><g fill="#222"><circle cx="2.700" cy="8" r="1.400"/><circle cx="8" cy="8" r="1.400"/><circle cx="13.300" cy="8" r="1.400"/><path d="M.2 12.700v-.9a2 2 0 0 1 2-2h1a2 2 0 0 1 2 2v.9zM5.500 12.700v-.9a2 2 0 0 1 2-2h1a2 2 0 0 1 2 2v.9zM10.800 12.700v-.9a2 2 0 0 1 2-2h1a2 2 0 0 1 2 2v.9z"/></g></svg><span id="t27" class="t " style="left:36.20px;top:3.10px;font-size:13px;font-weight:400;color:#222;transform:scaleX(0.9975);">Students</span></div>
<div class="tab" style="left:160.0px;width:144.5px"><svg style="left:9.200px;top:6px" width="12.300" height="13.200" viewBox="0 0 13 14"><path d="M6.500.3L.7 2.700v3.500c0 3.400 2.400 6.300 5.800 7.500 3.400-1.200 5.800-4.100 5.800-7.500V2.700z" fill="#9a9a9e"/><path d="M6.500.3L.7 2.700v3.500c0 3.400 2.400 6.300 5.800 7.500z" fill="#222"/></svg><span id="t28" class="t " style="left:33.30px;top:3.10px;font-size:13px;font-weight:400;color:#222;letter-spacing:0.002px;">Guardians</span></div>
<div class="tab" style="left:312.0px;width:144.5px"><svg style="left:8.800px;top:6px" width="12" height="12" viewBox="0 0 13 13"><path d="M2 9.300H1.700A1.200 1.200 0 0 1 .5 8.100V1.700A1.200 1.200 0 0 1 1.700.5h6.400a1.200 1.200 0 0 1 1.200 1.200V2" fill="none" stroke="#333" stroke-width="1"/><rect x="2.800" y="2.800" width="9.700" height="9.700" rx="1.800" fill="#9a9a9e"/><path d="M7.650 5.200v4.900M5.200 7.650h4.900" stroke="#222" stroke-width="1.500"/></svg><span id="t29" class="t " style="left:33.40px;top:3.10px;font-size:13px;font-weight:400;color:#222;transform:scaleX(0.9867);">Medical</span></div>
<div class="tab" style="left:463.0px;width:145px"><svg style="left:9.700px;top:6.300px" width="10" height="12.300" viewBox="0 0 11 13"><path d="M1.500 0H7l3.500 3.400V11.500A1.500 1.500 0 0 1 9 13H1.500A1.500 1.500 0 0 1 0 11.500v-10A1.500 1.500 0 0 1 1.500 0z" fill="#9a9a9e"/><circle cx="5.200" cy="6.300" r="1.500" fill="#222"/><path d="M2.300 10.900v-.5a1.800 1.800 0 0 1 1.800-1.800h2.200a1.800 1.800 0 0 1 1.800 1.800v.5z" fill="#222"/></svg><span id="t30" class="t " style="left:30.60px;top:3.10px;font-size:13px;font-weight:400;color:#222;transform:scaleX(0.9805);">Tagged Data</span></div>
<div class="tab on" style="left:615.0px;width:145px"><svg style="left:8.500px;top:6.300px" width="16.200" height="11.600" viewBox="0 0 17 12"><path d="M0 4.800A1.200 1.200 0 0 1 1.200 3.600H4L8.500 0 13 3.600h2.800A1.200 1.200 0 0 1 17 4.800V12H10.300V9.200a1.800 1.800 0 0 0-3.600 0V12H0z" fill="#8c8c90"/><circle cx="8.500" cy="4.700" r="2" fill="#e4e4e6"/><path d="M8.500 3.600v1.200h.9" stroke="#777" stroke-width=".6" fill="none"/><path d="M1.700 5.600h1.400v1.700H1.700zM1.700 8.600h1.400v1.700H1.700zM13.900 5.600h1.400v1.700h-1.400zM13.900 8.600h1.400v1.700h-1.400z" fill="#fff"/></svg><span id="t31" class="t " style="left:35.70px;top:2.60px;font-size:13px;font-weight:400;color:#222;letter-spacing:0.071px;">Staff</span></div>
<span id="t32" class="t " style="left:22.20px;top:266.85px;font-size:16.3px;font-weight:700;color:#222;transform:scaleX(0.9396);">Staff</span>
<div class="btn" style="left:998px;width:104px"><svg style="left:10.5px;top:9px" width="11" height="11" viewBox="0 0 11 11"><circle cx="5.500" cy="5.500" r="5.400" fill="#fff"/><path d="M5.500 2.600v5.800M2.600 5.500h5.800" stroke="#49a0ab" stroke-width="2.100"/></svg><span id="t33" class="t " style="left:25.30px;top:4.63px;font-size:12.6px;font-weight:400;color:#fff;transform:scaleX(0.9926);">Add Multiple</span></div>
<div class="btn" style="left:1110px;width:72px"><svg style="left:18px;top:9px" width="11" height="11" viewBox="0 0 11 11"><circle cx="5.500" cy="5.500" r="5.400" fill="#fff"/><path d="M5.500 2.600v5.800M2.600 5.500h5.800" stroke="#49a0ab" stroke-width="2.100"/></svg><span id="t34" class="t " style="left:32.60px;top:4.63px;font-size:12.6px;font-weight:400;color:#fff;transform:scaleX(0.9366);">Add</span></div>
<div class="hr" style="left:9px;top:304px;width:1186px"></div>
<span id="t35" class="t " style="left:58.80px;top:319.04px;font-size:12px;font-weight:700;color:#222;letter-spacing:0.438px;">Name</span>
<div class="hr" style="left:0;top:343px;width:1204px;background:#cfdcee"></div>
<div class="trow" style="top:343.5px;"><div class="av" style="left:6px;top:6.5px"></div><span id="t36" class="t ini" style="left:15.25px;top:12.96px;font-size:10.5px;font-weight:700;color:#fff;transform:scaleX(0.9251);">VB</span><span id="t37" class="t sbd" style="left:58.80px;top:13.09px;font-size:11px;font-weight:400;color:#1c1c1c;letter-spacing:0.229px;">Bishop, Veronica</span><svg style="left:951.7px;top:15.4px" width="11" height="13.200" viewBox="0 0 11 13.200"><path d="M3.100 2.300L3.900.5h3.200l.8 1.800" fill="none" stroke="#f4535f" stroke-width="1"/><rect x="0" y="2.100" width="11" height="1.100" rx=".4" fill="#f4535f"/><rect x="1" y="4.300" width="9.100" height="8.800" rx="1" fill="#f9a3aa"/><path d="M1.300 4.600v8M9.800 4.600v8" stroke="#f6737d" stroke-width=".7"/><path d="M2.900 4.800v7.500M4.700 4.800v7.500M6.500 4.800v7.500M8.200 4.800v7.500" stroke="#f5616c" stroke-width=".8"/><path d="M1.200 4.500h8.700" stroke="#f6737d" stroke-width=".6"/><rect x="1.200" y="12.100" width="8.700" height="1" rx=".4" fill="#f4434f"/></svg></div>
<div class="trow" style="top:388.5px;background:#fff;"><div class="av" style="left:6px;top:6.5px"></div><span id="t38" class="t ini" style="left:15.60px;top:12.96px;font-size:10.5px;font-weight:700;color:#fff;letter-spacing:-0.372px;transform:scaleX(0.9000);">SB</span><span id="t39" class="t sbd" style="left:58.80px;top:13.09px;font-size:11px;font-weight:400;color:#1c1c1c;letter-spacing:0.185px;">Bordes, Shannon</span><svg style="left:951.7px;top:15.4px" width="11" height="13.200" viewBox="0 0 11 13.200"><path d="M3.100 2.300L3.900.5h3.200l.8 1.800" fill="none" stroke="#f4535f" stroke-width="1"/><rect x="0" y="2.100" width="11" height="1.100" rx=".4" fill="#f4535f"/><rect x="1" y="4.300" width="9.100" height="8.800" rx="1" fill="#f9a3aa"/><path d="M1.300 4.600v8M9.800 4.600v8" stroke="#f6737d" stroke-width=".7"/><path d="M2.900 4.800v7.500M4.700 4.800v7.500M6.500 4.800v7.500M8.200 4.800v7.500" stroke="#f5616c" stroke-width=".8"/><path d="M1.200 4.500h8.700" stroke="#f6737d" stroke-width=".6"/><rect x="1.200" y="12.100" width="8.700" height="1" rx=".4" fill="#f4434f"/></svg></div>
<div class="trow" style="top:433.5px;height:44.400px;"><div class="av" style="left:6px;top:6.5px"></div><span id="t40" class="t ini" style="left:16.20px;top:12.96px;font-size:10.5px;font-weight:700;color:#fff;transform:scaleX(0.9043);">FF</span><span id="t41" class="t sbd" style="left:58.80px;top:13.09px;font-size:11px;font-weight:400;color:#1c1c1c;letter-spacing:0.221px;">Forston, Frank</span><svg style="left:951.7px;top:15.4px" width="11" height="13.200" viewBox="0 0 11 13.200"><path d="M3.100 2.300L3.900.5h3.200l.8 1.800" fill="none" stroke="#f4535f" stroke-width="1"/><rect x="0" y="2.100" width="11" height="1.100" rx=".4" fill="#f4535f"/><rect x="1" y="4.300" width="9.100" height="8.800" rx="1" fill="#f9a3aa"/><path d="M1.300 4.600v8M9.800 4.600v8" stroke="#f6737d" stroke-width=".7"/><path d="M2.900 4.800v7.500M4.700 4.800v7.500M6.500 4.800v7.500M8.200 4.800v7.500" stroke="#f5616c" stroke-width=".8"/><path d="M1.200 4.500h8.700" stroke="#f6737d" stroke-width=".6"/><rect x="1.200" y="12.100" width="8.700" height="1" rx=".4" fill="#f4434f"/></svg></div>
<div class="hl"></div></div>
</section>
<div class="badge" style="left:405.20000000000005px;top:545px"><span id="t42" class="t b12" style="left:7.40px;top:12.64px;font-size:27px;font-weight:400;color:#fff;transform:scaleX(0.9319);">12</span></div>
</main>
</body>
</html>
